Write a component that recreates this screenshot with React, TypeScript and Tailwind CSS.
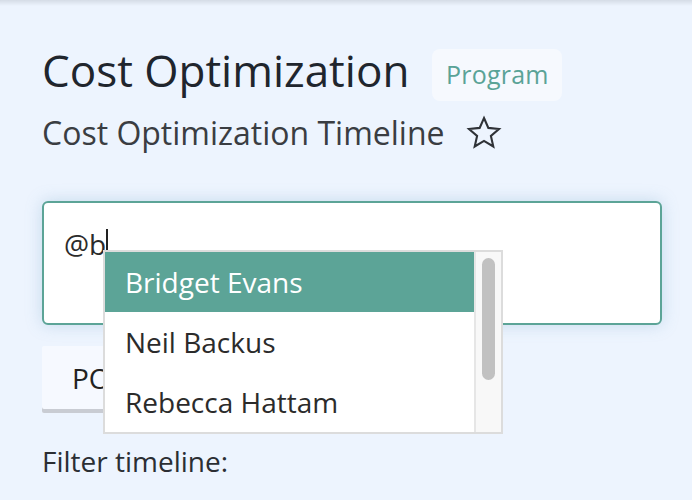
const people = ["Bridget Evans", "Neil Backus", "Rebecca Hattam"];

function StarIcon() {
    return (
        <svg width="36" height="36" viewBox="0 0 24 24" fill="none" className="text-[#2f3237]">
            <polygon
                points="12,2 14.9,8.6 22,9.3 16.6,14 18.2,21 12,17.3 5.8,21 7.4,14 2,9.3 9.1,8.6"
                stroke="currentColor"
                strokeWidth="1.4"
                strokeLinejoin="miter"
            />
        </svg>
    );
}

export default function App() {
    return (
        <div
            className="relative w-[692px] h-[500px] overflow-hidden bg-[#edf4fe] text-[#222831]"
            style={{ fontFamily: '"Open Sans", "Noto Sans", sans-serif' }}
        >
            {/* header shadow */}
            <div className="absolute inset-x-0 top-0 h-[6px] bg-gradient-to-b from-[#d5dce6] to-transparent" />

            <div className="px-[42px] pt-[44px]">
                {/* Title */}
                <div className="flex items-start gap-[23px]">
                    <h1 className="text-[44px] leading-[52px] text-[#20252d]">Cost Optimization</h1>
                    <span className="mt-[5px] flex h-[52px] w-[130px] items-center justify-center rounded-lg bg-[#f6f9fe] text-[25px] tracking-[0.2px] text-[#5aa397]">
                        Program
                    </span>
                </div>
                <div className="mt-[12px] flex items-center gap-[21px] text-[#3a3d42]">
                    <h2 className="text-[32px] leading-[40px]">Cost Optimization Timeline</h2>
                    <StarIcon />
                </div>

                {/* Comment box */}
                <div className="relative mt-[48px]">
                    <div className="h-[124px] w-[620px] rounded-[6px] border-2 border-[#5ca497] bg-white px-[20px] pt-[22px] shadow-[0_0_16px_rgba(120,170,200,0.35)]">
                        <div className="flex items-start text-[28px] leading-[38px] text-[#2b2b2b]">
                            <span>@b</span>
                            <span className="mt-[4px] h-[30px] w-[1.5px] bg-[#222]" />
                        </div>
                    </div>

                    {/* mention dropdown */}
                    <div className="absolute left-[61px] top-[49px] z-10 flex h-[184px] w-[400px] border-2 border-[#dcdcdc] bg-white">
                        <ul className="flex-1">
                            {people.map((p, i) => (
                                <li
                                    key={p}
                                    className={
                                        "flex h-[60px] items-center px-[20px] text-[28px] " +
                                        (i === 0 ? "bg-[#5ca497] text-white" : "text-[#2b2b2b]")
                                    }
                                >
                                    {p}
                                </li>
                            ))}
                        </ul>
                        <div className="w-[27px] border-l-2 border-[#e6e6e6] bg-[#f8f8f8] px-[6px] pt-[6px]">
                            <div className="h-[122px] rounded-full bg-[#c1c1c1]" />
                        </div>
                    </div>

                    {/* Post button */}
                    <button className="mt-[21px] h-[63px] rounded-[2px] bg-[#f6f9ff] px-[30px] text-[28px] text-[#222] shadow-[0_4px_0_#c9ccd3]">
                        POST
                    </button>
                </div>

                <p className="mt-[33px] text-[28px] leading-[38px] text-[#2b2e33]">Filter timeline:</p>
            </div>
        </div>
    );
}
